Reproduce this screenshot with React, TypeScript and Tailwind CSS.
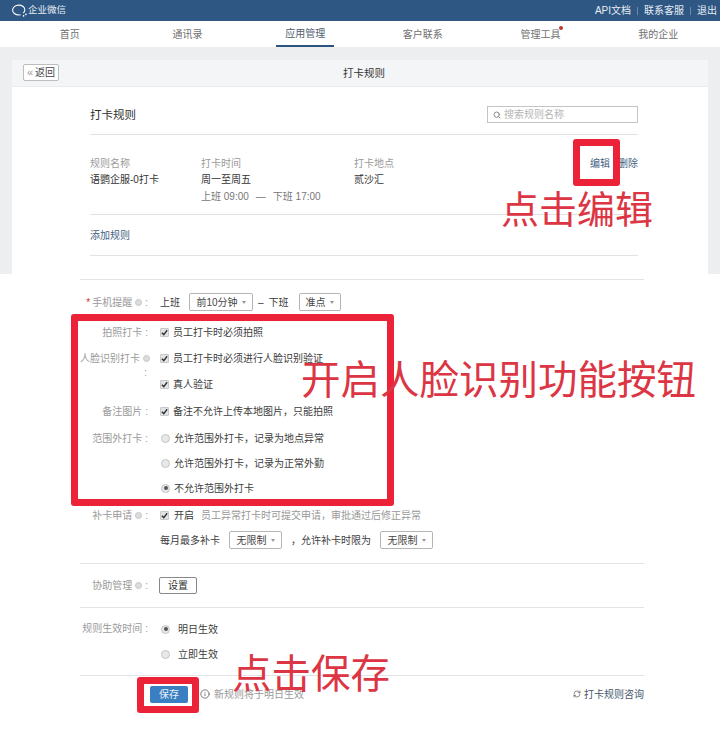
import React from 'react';
import { Search, Info, RefreshCw } from 'lucide-react';

const FONT = '[font-family:"Liberation_Sans","Noto_Sans_CJK_SC",sans-serif]';

const navItems = ['首页', '通讯录', '应用管理', '客户联系', '管理工具', '我的企业'];

const Hint = () => (
  <span className="inline-flex w-[7px] h-[7px] rounded-full bg-[#dcdcdc] border border-[#c6c6c6] mx-[3px] shrink-0" />
);

const Colon = () => <span className="ml-[3px]">:</span>;

const Check = () => (
  <span className="w-[9px] h-[9px] mr-[4px] shrink-0 rounded-[1px] bg-[#e4e4e4] border border-[#c8c8c8] flex items-center justify-center">
    <svg width="7" height="7" viewBox="0 0 8 8" fill="none">
      <path d="M1 4.2 L3.2 6.400 L7 1.400" stroke="#333" strokeWidth="1.6" />
    </svg>
  </span>
);

const Radio = ({ on }: { on?: boolean }) => (
  <span className="w-[9px] h-[9px] ml-[1px] mr-[4px] shrink-0 rounded-full bg-[#e8e8e8] border border-[#c4c4c4] flex items-center justify-center">
    {on && <span className="w-[4px] h-[4px] rounded-full bg-[#555]" />}
  </span>
);

const Select = ({ text, w }: { text: string; w: string }) => (
  <span className={`${w} h-[18px] shrink-0 flex items-center justify-center gap-[4px] border border-[#b5b5b5] rounded-[2px] bg-white text-[#444]`}>
    {text}
    <span className="w-0 h-0 border-x-[2px] border-x-transparent border-t-[3px] border-t-[#999]" />
  </span>
);

const Row = ({ label, h, children }: { label?: React.ReactNode; h: string; children?: React.ReactNode }) => (
  <div className={`${h} flex items-center`}>
    <div className="w-[150px] pr-[2px] flex justify-end items-center text-[#9a9a9a] whitespace-nowrap">{label}</div>
    <div className="ml-[10px] flex items-center text-[#3c3c3c] whitespace-nowrap">{children}</div>
  </div>
);

const Divider = () => <div className="ml-[80px] w-[564px] h-px bg-[#e4e4e4]" />;

export default function App() {
  return (
    <div className={`relative w-[720px] h-[732px] overflow-hidden bg-white text-[10px] ${FONT}`}>
      {/* top bar */}
      <div className="h-[21px] bg-[#2e5783] flex items-center justify-between pl-[11px] pr-[3px] text-[#e6ecf3]">
        <div className="flex items-center text-[9.5px]">
          <svg width="16" height="14" viewBox="0 0 15 13" fill="none" stroke="#fff" strokeWidth="1">
            <path d="M11.500 8.400 C12.600 7.400 13 6.400 13 5.400 C13 2.900 10.500 1 7.300 1 C4 1 1.500 3 1.500 5.600 C1.500 8.200 4 10.200 7.300 10.200 L9 10" />
            <circle cx="11.800" cy="11" r="0.8" fill="#fff" stroke="none" />
            <circle cx="14" cy="9.600" r="0.8" fill="#fff" stroke="none" />
          </svg>
          <span className="ml-[1px]">企业微信</span>
        </div>
        <div className="flex items-center">
          <span>API文档</span>
          <span className="mx-[6px] w-px h-[8px] bg-[#6c8aaa]" />
          <span>联系客服</span>
          <span className="mx-[6px] w-px h-[8px] bg-[#6c8aaa]" />
          <span>退出</span>
        </div>
      </div>

      {/* nav */}
      <div className="h-[26px] bg-white grid grid-cols-6 pl-[11px] pr-[3px] text-[#6f6f6f]">
        {navItems.map((item, i) => (
          <div key={item} className="flex justify-center">
            <div className={`relative h-full px-[9px] flex items-center ${i === 2 ? 'border-b-2 border-[#2c5480] text-[#4c5c6e]' : ''}`}>
              {item}
              {i === 4 && <span className="absolute right-[6px] top-[5px] w-[4px] h-[4px] rounded-full bg-[#c0392b]" />}
            </div>
          </div>
        ))}
      </div>

      {/* first shot */}
      <div className="h-[227px] bg-[#eceef0] pt-[13px] px-[12px] overflow-hidden">
        <div className="h-[300px] bg-white">
          <div className="h-[27px] bg-[#f4f5f6] border-b border-[#ebebeb] pl-[11px] flex items-center relative">
            <span className="w-[36px] h-[17px] mb-[2px] bg-white border border-[#bdbdbd] rounded-[2px] flex items-center justify-center text-[#444]">
              <span className="text-[#999] mr-[2px] text-[11px] leading-[11px]">«</span>返回
            </span>
            <span className="flex-1 text-center text-[#333] pr-[39px] pt-[1px] text-[10.500px]">打卡规则</span>
          </div>
          <div className="ml-[78px] w-[548px]">
            <div className="h-[48px] border-b border-[#e2e2e2] flex items-start justify-between">
              <span className="mt-[20px] leading-[16px] text-[11.500px] text-[#2f2f2f]">打卡规则</span>
              <div className="mt-[19px] w-[151px] h-[17px] border border-[#c4c4c4] flex items-center pl-[5px] text-[#b5b5b5]">
                <Search size={8} strokeWidth={3} color="#8a8a8a" />
                <span className="ml-[3px]">搜索规则名称</span>
              </div>
            </div>
            <div className="h-[80px] border-b border-[#e2e2e2] flex pt-[22px]">
              <div className="w-[111px]">
                <div className="text-[#9a9a9a] leading-[14px]">规则名称</div>
                <div className="text-[#333] leading-[18px]">语鹦企服-0打卡</div>
              </div>
              <div className="w-[153px]">
                <div className="text-[#9a9a9a] leading-[14px]">打卡时间</div>
                <div className="text-[#333] leading-[18px]">周一至周五</div>
                <div className="text-[#777] leading-[16px] flex gap-[7px]">
                  <span>上班 09:00</span>
                  <span>—</span>
                  <span>下班 17:00</span>
                </div>
              </div>
              <div className="flex-1">
                <div className="text-[#9a9a9a] leading-[14px]">打卡地点</div>
                <div className="text-[#333] leading-[18px]">贰沙汇</div>
              </div>
              <div className="flex gap-[8px] text-[#44617f] leading-[14px]">
                <span>编辑</span>
                <span>删除</span>
              </div>
            </div>
            <div className="h-[41px] border-b border-[#e2e2e2] flex items-center text-[#44617f]">添加规则</div>
          </div>
        </div>
      </div>

      {/* second shot */}
      <div className="pt-[5px]">
        <Divider />
        <div className="h-[5px]" />
        <Row h="h-[34px]" label={<><span className="text-[#c33] mr-[2px]">*</span>手机提醒<Hint />:</>}>
          <span className="mr-[9px]">上班</span>
          <Select text="前10分钟" w="w-[64px]" />
          <span className="ml-[5px] mr-[5px]">–</span>
          <span className="mr-[10px]">下班</span>
          <Select text="准点" w="w-[42px]" />
        </Row>
        <Row h="h-[26px]" label={<>拍照打卡<Colon /></>}><Check />员工打卡时必须拍照</Row>
        <Row
          h="h-[26px]"
          label={
            <span className="relative -mr-[5px]">
              人脸识别打卡
              <Hint />
              <span className="absolute right-[6px] top-[14px]">:</span>
            </span>
          }
        >
          <Check />员工打卡时必须进行人脸识别验证
        </Row>
        <Row h="h-[26px]"><Check />真人验证</Row>
        <Row h="h-[28px]" label={<>备注图片<Colon /></>}><Check />备注不允许上传本地图片，只能拍照</Row>
        <Row h="h-[26px]" label={<>范围外打卡<Colon /></>}><Radio />允许范围外打卡，记录为地点异常</Row>
        <Row h="h-[24px]"><Radio />允许范围外打卡，记录为正常外勤</Row>
        <Row h="h-[26px]"><Radio on />不允许范围外打卡</Row>
        <Row h="h-[28px]" label={<>补卡申请<Hint />:</>}>
          <Check />
          <span className="ml-[1px] mr-[7px]">开启</span>
          <span className="text-[#999]">员工异常打卡时可提交申请，审批通过后修正异常</span>
        </Row>
        <Row h="h-[22px]">
          <span className="mr-[9px]">每月最多补卡</span>
          <Select text="无限制" w="w-[53px]" />
          <span className="ml-[9px] mr-[9px]">，允许补卡时限为</span>
          <Select text="无限制" w="w-[53px]" />
        </Row>
        <div className="h-[12px]" />
        <Divider />
        <Row h="h-[43px]" label={<>协助管理<Hint />:</>}>
          <span className="-ml-[1px] w-[38px] h-[17px] border border-[#888] rounded-[2px] flex items-center justify-center text-[#333]">设置</span>
        </Row>
        <Divider />
        <div className="h-[7px]" />
        <Row h="h-[28px]" label={<span className="mb-[2px]">规则生效时间<Colon /></span>}>
          <Radio on /><span className="ml-[4px]">明日生效</span>
        </Row>
        <Row h="h-[22px]"><Radio /><span className="ml-[4px]">立即生效</span></Row>
        <div className="h-[10px]" />
        <Divider />
        <div className="h-[36px] ml-[150px] w-[494px] flex items-center justify-between">
          <div className="flex items-center">
            <span className="w-[38px] h-[17px] rounded-[2px] bg-[#3a7fc1] text-[#e8f0f8] flex items-center justify-center">保存</span>
            <Info size={10} color="#666" className="ml-[12px] mr-[4px]" />
            <span className="text-[#999]">新规则将于明日生效</span>
          </div>
          <div className="flex items-center text-[#44566b]">
            <RefreshCw size={8} color="#555" className="mr-[3px]" />
            打卡规则咨询
          </div>
        </div>
      </div>

      {/* red marks painted over the screenshot */}
      <div className="absolute left-[573px] top-[139px] w-[47px] h-[47px] border-[7px] border-[#ec2238] rounded-[3px]" />
      <div className="absolute left-[501px] top-[188px] text-[38px] leading-[44px] text-[#dc3544] whitespace-nowrap">点击编辑</div>
      <div className="absolute left-[71px] top-[314px] w-[323px] h-[192px] border-[7px] border-[#ec2238] rounded-[3px]" />
      <div className="absolute left-[301px] top-[357px] text-[39.500px] leading-[46px] text-[#dc3544] whitespace-nowrap">开启人脸识别功能按钮</div>
      <div className="absolute left-[137px] top-[677px] w-[62px] h-[36px] border-[7px] border-[#ec2238] rounded-[3px]" />
      <div className="absolute left-[232px] top-[651px] text-[39.500px] leading-[46px] text-[#dc3544] whitespace-nowrap">点击保存</div>
    </div>
  );
}
